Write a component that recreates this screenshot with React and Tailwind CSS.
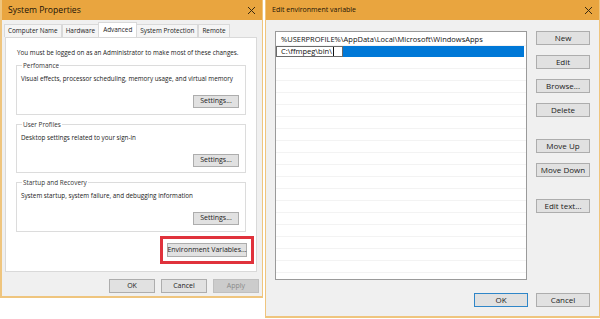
import React from "react";

// Windows-ish dialog bits, scaled down like the screenshot
const font = { fontFamily: '"Open Sans", "Noto Sans", sans-serif' };

function CloseX() {
  return (
    <svg width="9" height="9" viewBox="0 0 9 9" className="block">
      <path d="M1 1 L8 8 M8 1 L1 8" stroke="#3a2a10" strokeWidth="1" fill="none" />
    </svg>
  );
}

function TitleBar({ title, size }) {
  return (
    <div className="h-[20px] bg-[#e9a53f] flex items-center justify-between pl-[6px] pr-[6px] shrink-0">
      <span className={"text-[#1a1206] whitespace-nowrap " + size}>{title}</span>
      <CloseX />
    </div>
  );
}

function Btn({ children, w = "w-[46px]", h = "h-[14px]", disabled, focus, className = "" }) {
  return (
    <div
      className={
        "flex items-center justify-center whitespace-nowrap border shrink-0 " +
        w + " " + h + " " +
        (disabled
          ? "bg-[#cccccc] border-[#bfbfbf] text-[#8a8a8a] "
          : focus
          ? "bg-[#e1e1e1] border-[#2f86c8] text-[#222] "
          : "bg-[#e1e1e1] border-[#adadad] text-[#222] ") +
        className
      }
    >
      {children}
    </div>
  );
}

function Group({ label, text, className = "", mb = "mb-[6px]" }) {
  return (
    <fieldset className={"border border-[#dcdcdc] mx-[10px] px-[4px] min-w-0 " + className}>
      <legend className="text-[6.4px] text-[#333] px-[1px] ml-[1px] leading-[9px]">{label}</legend>
      <div className="text-[6.3px] text-[#222] leading-[9px] mt-[4px] whitespace-nowrap">{text}</div>
      <div className={"flex justify-end pr-[2px] mt-[12px] " + mb}>
        <Btn h="h-[13px]" className="text-[7px]">Settings...</Btn>
      </div>
    </fieldset>
  );
}

function SystemProperties() {
  const tabs = ["Computer Name", "Hardware", "Advanced", "System Protection", "Remote"];
  return (
    <div className="w-[263px] h-[298px] bg-[#f0f0f0] border-l-[2px] border-r border-b-[2px] border-[#efc57e] flex flex-col shrink-0">
      <TitleBar title="System Properties" size="text-[8.6px]" />
      <div className="flex items-end pl-[2px] h-[17px]">
        {tabs.map(function (t) {
          const sel = t === "Advanced";
          return (
            <div
              key={t}
              className={
                "text-[6.4px] text-[#222] whitespace-nowrap border border-[#d9d9d9] border-b-0 flex items-center " +
                (sel ? "bg-white h-[15px] -mx-[1px] px-[4px] relative z-10" : "bg-[#f5f5f5] h-[13px] px-[3px]")
              }
            >
              {t}
            </div>
          );
        })}
      </div>
      <div className="mx-[3px] w-[252px] h-[235px] bg-white border border-[#d9d9d9] flex flex-col">
        <div className="text-[6.3px] text-[#222] pl-[11px] pt-[10px] leading-[9px] whitespace-nowrap">
          You must be logged on as an Administrator to make most of these changes.
        </div>
        <Group label="Perfomance" text="Visual effects, processor scheduling, memory usage, and virtual memory" className="mt-[4px]" />
        <Group label="User Profiles" text="Desktop settings related to your sign-in" className="mt-[5px]" mb="mb-[5px]" />
        <Group label="Startup and Recovery" text="System startup, system failure, and debugging information" className="mt-[5px]" />
        <div className="flex justify-end pr-[2px] mt-[4px]">
          <div className="border-[3px] border-[#e0323c] px-[4px] py-[4px]">
            <Btn w="w-[80px]" className="text-[7px]">Environment Variables...</Btn>
          </div>
        </div>
      </div>
      <div className="flex justify-end gap-[6px] pr-[3px] mt-[7px]">
        <Btn className="text-[7px]">OK</Btn>
        <Btn className="text-[7px]">Cancel</Btn>
        <Btn disabled className="text-[7px]">Apply</Btn>
      </div>
    </div>
  );
}

function EditEnv() {
  const rows = Array.from({ length: 18 });
  return (
    <div className="w-[335px] h-[318px] bg-[#f0f0f0] border-l border-r border-b-[2px] border-[#efc57e] flex flex-col shrink-0">
      <TitleBar title="Edit environment variable" size="text-[7px]" />
      <div className="flex pl-[9px] pt-[11px]">
        <div className="w-[252px] h-[249px] bg-white border border-[#9a9a9a] flex flex-col pt-[2px] overflow-hidden">
          <div className="h-[12px] flex items-center pl-[5px] text-[7.5px] text-[#111] whitespace-nowrap border-b border-[#f3f3f3] shrink-0">
            %USERPROFILE%\AppData\Local\Microsoft\WindowsApps
          </div>
          <div className="h-[11px] flex bg-[#0078d7] mr-[2px] shrink-0">
            <div className="w-[67px] bg-white border border-[#6a6a6a] flex items-center pl-[4px] text-[7.5px] text-[#111] whitespace-nowrap">
              C:\ffmpeg\bin\<span className="inline-block w-[1px] h-[9px] bg-[#111] ml-[1px]" />
            </div>
          </div>
          {rows.map(function (_, i) {
            return <div key={i} className="h-[12px] border-b border-[#f3f3f3] shrink-0" />;
          })}
        </div>
        <div className="flex flex-col ml-[9px]">
          <Btn w="w-[54px]" className="text-[8px]">New</Btn>
          <Btn w="w-[54px]" className="mt-[10px] text-[8px]">Edit</Btn>
          <Btn w="w-[54px]" className="mt-[10px] text-[8px]">Browse...</Btn>
          <Btn w="w-[54px]" className="mt-[10px] text-[8px]">Delete</Btn>
          <Btn w="w-[54px]" className="mt-[22px] text-[8px]">Move Up</Btn>
          <Btn w="w-[54px]" className="mt-[10px] text-[8px]">Move Down</Btn>
          <Btn w="w-[54px]" className="mt-[22px] text-[8px]">Edit text...</Btn>
        </div>
      </div>
      <div className="flex justify-end gap-[8px] pr-[9px] mt-[13px]">
        <Btn w="w-[54px]" focus className="text-[8px]">OK</Btn>
        <Btn w="w-[54px]" className="text-[8px]">Cancel</Btn>
      </div>
    </div>
  );
}

export default function App() {
  return (
    <div className="w-[600px] h-[319px] bg-white flex gap-[2px] overflow-hidden" style={font}>
      <SystemProperties />
      <EditEnv />
    </div>
  );
}
